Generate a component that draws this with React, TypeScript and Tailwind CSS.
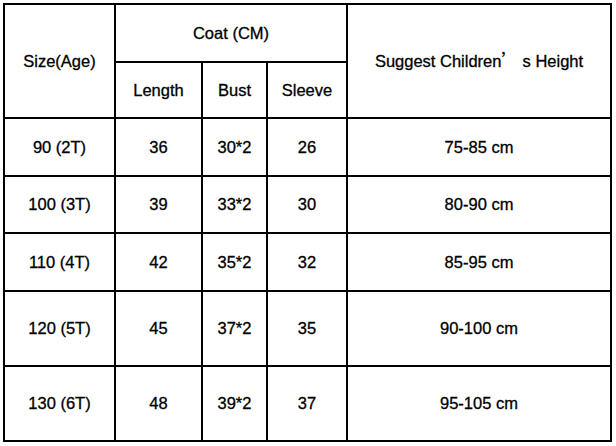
const rows = [
  { size: "90 (2T)", length: "36", bust: "30*2", sleeve: "26", height: "75-85 cm" },
  { size: "100 (3T)", length: "39", bust: "33*2", sleeve: "30", height: "80-90 cm" },
  { size: "110 (4T)", length: "42", bust: "35*2", sleeve: "32", height: "85-95 cm" },
  { size: "120 (5T)", length: "45", bust: "37*2", sleeve: "35", height: "90-100 cm" },
  { size: "130 (6T)", length: "48", bust: "39*2", sleeve: "37", height: "95-105 cm" },
];

function Cell({ children, className = "" }: { children: React.ReactNode; className?: string }) {
  return (
    <div className={`flex items-center justify-center bg-white text-center ${className}`}>
      {children}
    </div>
  );
}

export default function App() {
  return (
    <div className="h-[446px] w-[616px] bg-white pl-[3px] pt-[3px] font-['Liberation_Sans',Arial,sans-serif] text-[16.5px] text-black [-webkit-text-stroke:0.3px_#000]">
      <div className="grid w-fit grid-cols-[109px_85px_63px_78px_262px] grid-rows-[56px_54px_56px_55px_56px_73px_73px] gap-[2px] bg-black p-[2px]">
        <Cell className="row-span-2">Size(Age)</Cell>
        <Cell className="col-span-3">Coat (CM)</Cell>
        <Cell className="row-span-2">
          <span>
            Suggest Children
            <span className="font-['Noto_Sans_CJK_SC',sans-serif]">’</span> s Height
          </span>
        </Cell>
        <Cell>Length</Cell>
        <Cell>Bust</Cell>
        <Cell>Sleeve</Cell>
        {rows.map((r) => (
          <div key={r.size} className="contents">
            <Cell>{r.size}</Cell>
            <Cell>{r.length}</Cell>
            <Cell>{r.bust}</Cell>
            <Cell>{r.sleeve}</Cell>
            <Cell>{r.height}</Cell>
          </div>
        ))}
      </div>
    </div>
  );
}
